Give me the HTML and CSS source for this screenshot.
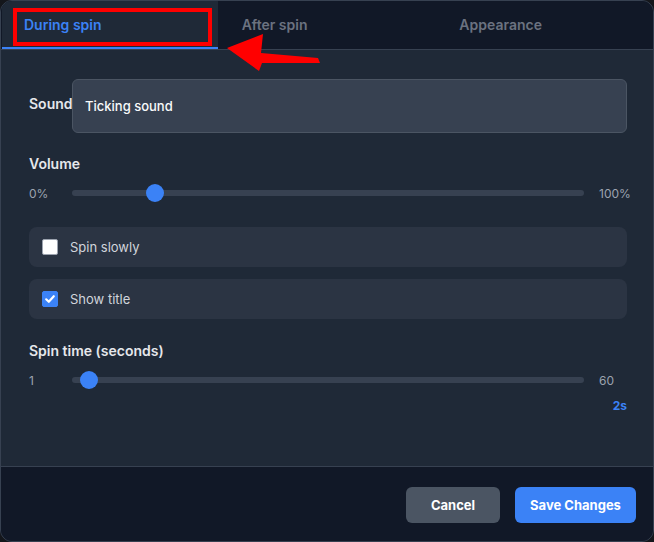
FILE: index.html
```html
<!DOCTYPE html>
<html>
	<head>
		<meta charset="UTF-8">
		<title>Spin settings</title>
		<link rel="stylesheet" href="styles.css">
	</head>

	<body>

		<div class="modal">

			<div class="tabs">
				<div class="tab active">During spin</div>
				<div class="tab">After spin</div>
				<div class="tab">Appearance</div>
			</div>

			<div class="content">

				<div class="field-row">
					<label class="field-label">Sound</label>
					<div class="select">Ticking sound</div>
				</div>

				<div class="section-label">Volume</div>
				<div class="slider-row">
					<span class="slider-min">0%</span>
					<div class="track">
						<div class="thumb" style="left: calc((100% - 18px) * 0.15)"></div>
					</div>
					<span class="slider-max">100%</span>
				</div>

				<div class="check-row first">
					<span class="box"></span>
					<span class="check-text">Spin slowly</span>
				</div>
				<div class="check-row">
					<span class="box checked">
						<svg width="12" height="12" viewBox="0 0 12 12"><path d="M2.2 6.3 L4.8 8.8 L9.8 3.2" fill="none" stroke="#fff" stroke-width="2.2" stroke-linecap="round" stroke-linejoin="round"/></svg>
					</span>
					<span class="check-text">Show title</span>
				</div>

				<div class="section-label spin">Spin time (seconds)</div>
				<div class="slider-row tight">
					<span class="slider-min">1</span>
					<div class="track">
						<div class="thumb" style="left: calc((100% - 18px) * 0.017)"></div>
					</div>
					<span class="slider-max">60</span>
				</div>
				<div class="slider-value">2s</div>

			</div>

			<div class="footer">
				<button class="btn cancel">Cancel</button>
				<button class="btn save">Save Changes</button>
			</div>

		</div>

		<!-- annotation drawn over the screenshot -->
		<svg class="annotation" width="654" height="542" viewBox="0 0 654 542">
			<rect x="15" y="10" width="195" height="34" fill="none" stroke="#ff0000" stroke-width="4"/>
			<polygon points="227,48 263,34 261,53 318,58 320,63 262,63 259,71" fill="#ff0000"/>
		</svg>

	</body>

</html>
```

FILE: styles.css
```css
* { margin: 0; padding: 0; box-sizing: border-box }

body {
	background: #14161b;
	font-family: Inter, "Noto Sans", sans-serif;
	width: 654px;
	height: 542px;
	overflow: hidden;
	position: relative;
}

.modal {
	width: 654px;
	height: 542px;
	border: 1px solid #374151;
	border-radius: 12px;
	overflow: hidden;
	background: #1f2937;
	display: flex;
	flex-direction: column;
}

/* tabs */

.tabs {
	display: flex;
	background: #111827;
	border-bottom: 1px solid #374151;
	height: 49px;
}

.tab {
	flex: 1;
	display: flex;
	align-items: center;
	padding: 0 0 1px 24px;
	font-size: 14px;
	font-weight: 600;
	color: #6b7280;
}

.tab:first-child { padding-left: 22px }

.tab.active {
	background: #1f2937;
	color: #3b82f6;
	box-shadow: inset 0 -2px 0 #3b82f6;
	margin-left: 1px;
}

/* content */

.content {
	flex: 1;
	padding: 29px 26px 0 28px;
	border-bottom: 1px solid #374151;
}

.field-row {
	display: flex;
	align-items: center;
}

.field-label {
	width: 43px;
	font-size: 14px;
	font-weight: 600;
	color: #e5e7eb;
	white-space: nowrap;
	margin-top: -6px;
}

.select {
	flex: 1;
	height: 54px;
	background: #374151;
	border: 1px solid #4b5563;
	border-radius: 6px;
	display: flex;
	align-items: center;
	padding-left: 12px;
	font-size: 13px;
	font-weight: 500;
	color: #f9fafb;
}

.section-label {
	margin-top: 21px;
	line-height: 20px;
	font-size: 14px;
	font-weight: 600;
	color: #e5e7eb;
}

.section-label.spin { margin-top: 22px }

.slider-row {
	margin-top: 9px;
	height: 20px;
	display: flex;
	align-items: center;
	font-size: 12px;
	color: #9ca3af;
}

.slider-row.tight { margin-top: 9px }

.slider-min { width: 43px }

.slider-max {
	width: 28px;
	margin-left: 15px;
	white-space: nowrap;
}

.track {
	flex: 1;
	height: 6px;
	border-radius: 3px;
	background: #374151;
	position: relative;
}

.thumb {
	position: absolute;
	top: -6px;
	width: 18px;
	height: 18px;
	border-radius: 50%;
	background: #3b82f6;
}

.slider-value {
	margin-top: 8px;
	line-height: 16px;
	text-align: right;
	font-size: 12px;
	font-weight: 700;
	color: #3b82f6;
}

/* checkbox rows */

.check-row {
	margin-top: 12px;
	height: 40px;
	border-radius: 8px;
	background: #2b3443;
	display: flex;
	align-items: center;
	padding-left: 13px;
	gap: 12px;
}

.check-row.first { margin-top: 24px }

.box {
	width: 16px;
	height: 16px;
	border-radius: 2px;
	background: #fff;
	border: 1px solid #9ca3af;
	display: flex;
	align-items: center;
	justify-content: center;
}

.box.checked {
	background: #3b82f6;
	border-color: #3b82f6;
}

.check-text {
	font-size: 13px;
	color: #d1d5db;
}

/* footer */

.footer {
	height: 74px;
	background: #111827;
	display: flex;
	justify-content: flex-end;
	align-items: flex-start;
	gap: 15px;
	padding: 20px 17px 0 0;
}

.btn {
	height: 36px;
	border: none;
	border-radius: 6px;
	font-family: inherit;
	font-size: 13px;
	font-weight: 700;
	color: #fff;
}

.btn.cancel {
	width: 94px;
	background: #4b5563;
}

.btn.save {
	width: 121px;
	background: #3b82f6;
}

.annotation {
	position: absolute;
	top: 0;
	left: 0;
	pointer-events: none;
}
```
